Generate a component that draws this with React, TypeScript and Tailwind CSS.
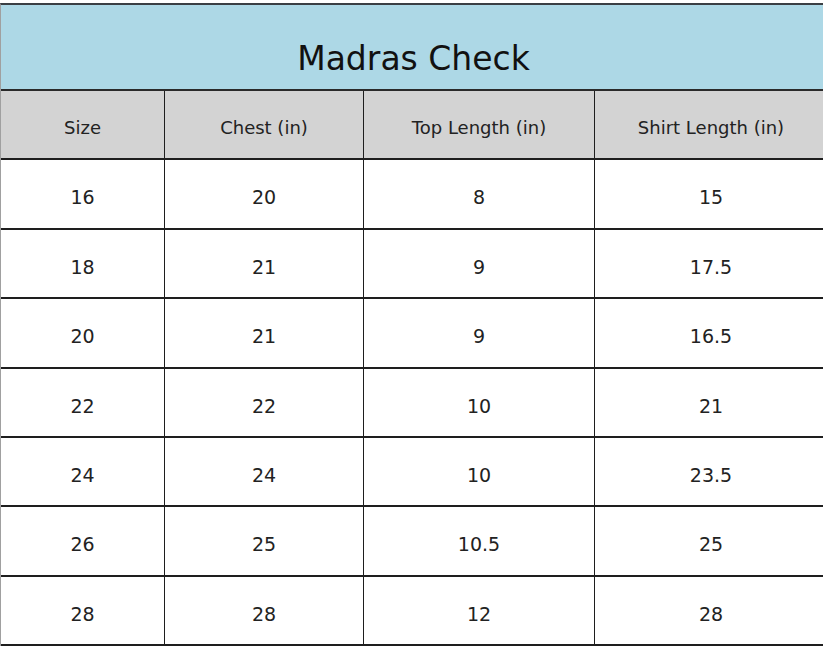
const HEADERS = ["Size", "Chest (in)", "Top Length (in)", "Shirt Length (in)"];

const ROWS = [
  ["16", "20", "8", "15"],
  ["18", "21", "9", "17.5"],
  ["20", "21", "9", "16.5"],
  ["22", "22", "10", "21"],
  ["24", "24", "10", "23.5"],
  ["26", "25", "10.5", "25"],
  ["28", "28", "12", "28"],
];

const ROW_HEIGHTS = ["h-[70px]", "h-[69px]", "h-[70px]", "h-[69px]", "h-[69px]", "h-[70px]", "h-[69px]"];

const COLS = "grid grid-cols-[164px_199px_231px_232px]";

export default function App() {
  return (
    <div
      className="w-[823px] h-[653px] overflow-hidden bg-white pt-[3px] text-[#222]"
      style={{ fontFamily: '"DejaVu Sans", Verdana, sans-serif' }}
    >
      <div className="w-[826px] border-l border-l-[#a0a0a0] border-t-2 border-t-[#3a3f44]">
        {/* Title */}
        <div className="h-[86px] bg-[#add8e6] border-b-2 border-b-[#2a2a2a] flex justify-center pt-[35px]">
          <h1 className="text-[33px] leading-[38px] text-[#111]">Madras Check</h1>
        </div>
        {/* Header row */}
        <div className={`${COLS} h-[69px] bg-[#d3d3d3] border-b-2 border-b-[#1e1e1e]`}>
          {HEADERS.map((h, i) => (
            <div
              key={h}
              className={`flex items-center justify-center pt-[5px] text-[18px] ${
                i < 3 ? "border-r-[1.5px] border-r-[#1e1e1e]" : ""
              }`}
            >
              {h}
            </div>
          ))}
        </div>
        {/* Data rows */}
        {ROWS.map((row, r) => (
          <div key={r} className={`${COLS} ${ROW_HEIGHTS[r]} border-b-2 border-b-[#1e1e1e]`}>
            {row.map((cell, i) => (
              <div
                key={i}
                className={`flex items-center justify-center pt-[7px] text-[19px] ${
                  i < 3 ? "border-r-[1.5px] border-r-[#1e1e1e]" : ""
                }`}
              >
                {cell}
              </div>
            ))}
          </div>
        ))}
      </div>
    </div>
  );
}
